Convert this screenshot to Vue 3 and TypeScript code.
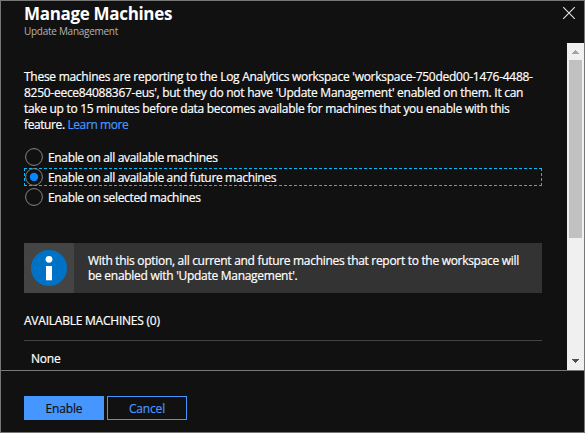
<script setup lang="ts">
import { ref } from 'vue'

interface Option {
  id: string
  label: string
}

const options: Option[] = [
  { id: 'available', label: 'Enable on all available machines' },
  { id: 'future', label: 'Enable on all available and future machines' },
  { id: 'selected', label: 'Enable on selected machines' },
]
const selected = ref<string>('future')
</script>

<template>
  <div class="blade">
    <header class="header">
      <div>
        <h1><span>Manage Machines</span></h1>
        <div class="subtitle"><span>Update Management</span></div>
      </div>
      <button class="close" aria-label="Close">
        <svg width="14" height="14" viewBox="0 0 14 14">
          <path d="M1.2 1.2 12.8 12.8M12.8 1.2 1.2 12.8" stroke="#e4e4e4" stroke-width="1.1" fill="none" />
        </svg>
      </button>
    </header>

    <div class="body">
      <main class="content">
        <p class="intro">
          <span class="l1">These machines are reporting to the Log Analytics workspace 'workspace-750ded00-1476-4488-</span><br />
          <span class="l2">8250-eece84088367-eus', but they do not have 'Update Management' enabled on them. It can</span><br />
          <span class="l3">take up to 15 minutes before data becomes available for machines that you enable with this</span><br />
          <span class="l4">feature. <a>Learn more</a></span>
        </p>

        <div class="options" role="radiogroup">
          <div
            v-for="o in options"
            :key="o.id"
            class="option"
            :class="{ on: selected === o.id }"
            role="radio"
            :aria-checked="selected === o.id"
            @click="selected = o.id"
          >
            <svg class="radio" width="18" height="18" viewBox="0 0 18 18">
              <circle cx="9" cy="9" r="8.4" fill="none" stroke="#858585" stroke-width="1" />
              <circle v-if="selected === o.id" cx="9" cy="9" r="4.2" fill="#0a85ff" />
            </svg>
            <span class="label">{{ o.label }}</span>
          </div>
        </div>

        <div class="info">
          <div class="info-icon">
            <svg width="36" height="36" viewBox="0 0 36 36">
              <circle cx="18" cy="18" r="18" fill="#0072c6" />
              <circle cx="18" cy="9.3" r="3.4" fill="#fff" />
              <rect x="15" y="16" width="6" height="14.3" fill="#fff" />
            </svg>
          </div>
          <div class="info-text">
            <span class="i1">With this option, all current and future machines that report to the workspace will</span><br />
            <span class="i2">be enabled with 'Update Management'.</span>
          </div>
        </div>

        <h2><span>AVAILABLE MACHINES (0)</span></h2>
        <div class="none"><span>None</span></div>
      </main>

      <div class="scrollbar">
        <svg width="17" height="17" viewBox="0 0 17 17" shape-rendering="crispEdges">
          <path d="M5 11h7v-1h-1v-1h-1v-1h-1v-1h-1v1h-1v1h-1v1h-1z" fill="#a3a3a3" />
        </svg>
        <div class="thumb"></div>
        <svg class="down" width="17" height="17" viewBox="0 0 17 17" shape-rendering="crispEdges">
          <path d="M5 6h7v1h-1v1h-1v1h-1v1h-1v-1h-1v-1h-1v-1h-1z" fill="#505050" />
        </svg>
      </div>
    </div>

    <footer class="footer">
      <button class="btn primary"><span>Enable</span></button>
      <button class="btn"><span>Cancel</span></button>
    </footer>
  </div>
</template>

<style>
body {
  background: #111;
  overflow: hidden;
}
</style>

<style scoped>
.blade {
  box-sizing: border-box;
  width: 585px;
  height: 433px;
  border: 1px solid #777;
  background: #111;
  color: #fff;
  font-family: 'Segoe UI', 'Open Sans', 'Noto Sans', sans-serif;
  font-size: 12px;
  display: flex;
  flex-direction: column;
  overflow: hidden;
  white-space: nowrap;
  -webkit-text-stroke: 0.2px;
}
.header {
  height: 42px;
  flex: none;
  display: flex;
  justify-content: space-between;
  padding: 0 8px 0 23px;
}
h1 {
  margin: 0;
  padding-top: 1px;
  font-size: 17px;
  line-height: 23px;
  font-weight: 700;
  letter-spacing: -0.32px;
  -webkit-text-stroke: 0;
}
.subtitle {
  font-size: 10px;
  line-height: 13px;
  color: #b4b4b4;
  letter-spacing: -0.28px;
  -webkit-text-stroke: 0;
}
.close {
  border: 0;
  background: none;
  padding: 5px 0 0;
  height: 19px;
}
.close svg {
  display: block;
}
.body {
  height: 327px;
  flex: none;
  display: flex;
  border-bottom: 1px solid #777;
}
.content {
  flex: 1;
  padding: 26px 25px 0 23px;
  min-width: 0;
}
.intro {
  margin: 0;
  line-height: 16px;
}
.l1 {
  letter-spacing: -0.275px;
}
.l2 {
  letter-spacing: -0.27px;
}
.l3 {
  letter-spacing: -0.31px;
}
.l4 {
  letter-spacing: -0.4px;
}
.intro a {
  color: #4596ff;
}
.options {
  padding-top: 14px;
}
.option {
  box-sizing: border-box;
  height: 20px;
  display: flex;
  align-items: center;
  gap: 5px;
  padding-left: 1px;
  line-height: 16px;
}
.option.on {
  --dash: #00bcf8 0 3px, transparent 3px 5px;
  height: 18px;
  margin: 1px 0;
  background:
    repeating-linear-gradient(90deg, var(--dash)) top / 100% 1px no-repeat,
    repeating-linear-gradient(90deg, var(--dash)) bottom / 100% 1px no-repeat,
    repeating-linear-gradient(180deg, var(--dash)) left / 1px 100% no-repeat,
    repeating-linear-gradient(180deg, var(--dash)) right / 1px 100% no-repeat;
}
.radio {
  flex: none;
}
.label {
  padding-top: 2px;
  letter-spacing: -0.34px;
}
.info {
  margin-top: 36px;
  height: 50px;
  display: flex;
  background: #333;
}
.info-icon {
  width: 50px;
  flex: none;
  background: #444;
  display: flex;
  align-items: center;
  justify-content: center;
}
.info-text {
  padding: 10px 0 0 14px;
  line-height: 15px;
}
.i1 {
  letter-spacing: -0.305px;
}
.i2 {
  letter-spacing: -0.28px;
}
h2 {
  margin: 20px 0 0;
  height: 27px;
  border-bottom: 1px solid #444;
  font-size: 12px;
  font-weight: 400;
  line-height: 16px;
  letter-spacing: -0.23px;
}
.none {
  padding: 10px 7px 0;
  line-height: 16px;
  letter-spacing: -0.2px;
}
.scrollbar {
  width: 17px;
  flex: none;
  display: flex;
  flex-direction: column;
  background: #f0f0f0;
}
.thumb {
  width: 13px;
  height: 178px;
  margin-left: 2px;
  background: #c1c1c1;
}
.down {
  margin-top: auto;
}
.footer {
  display: flex;
  gap: 3px;
  padding: 25px 0 0 23px;
}
.btn {
  box-sizing: border-box;
  width: 80px;
  height: 24px;
  padding: 2px 0 0;
  border: 1px solid #4596ff;
  background: transparent;
  color: #4596ff;
  font: 12px/20px 'Segoe UI', 'Open Sans', 'Noto Sans', sans-serif;
  letter-spacing: -0.15px;
  -webkit-text-stroke: 0.2px;
}
.primary {
  background: #4596ff;
  color: #111;
}
</style>
